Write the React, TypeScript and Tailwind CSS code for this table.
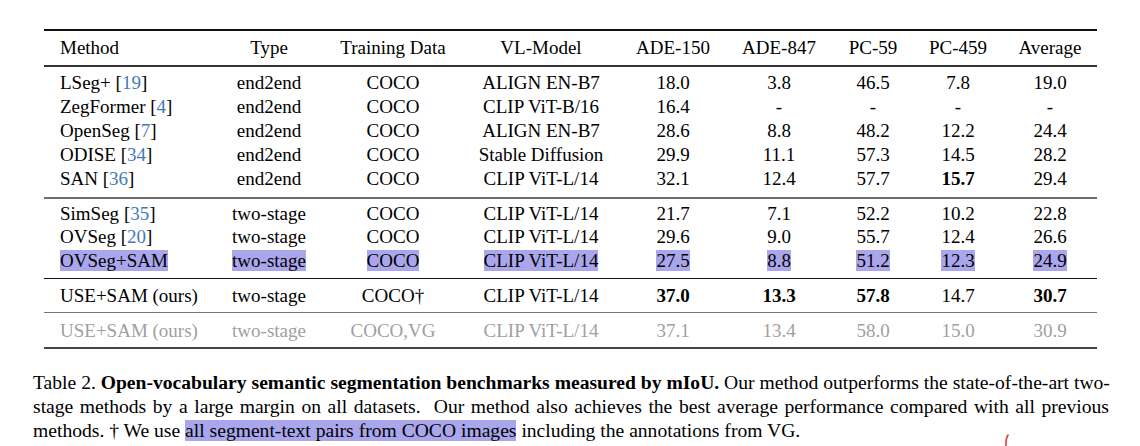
type Cell = {
  text: string;
  cite?: string;
  bold?: boolean;
};

type Row = {
  cells: Cell[];
  highlight?: boolean;
};

const gridCols =
  'grid grid-cols-[164px_122px_126px_170px_94px_118px_70px_100px_89px]';

const header = ['Method', 'Type', 'Training Data', 'VL-Model', 'ADE-150', 'ADE-847', 'PC-59', 'PC-459', 'Average'];

const c = (text: string, bold = false): Cell => ({ text, bold });

const endToEnd: Row[] = [
  { cells: [{ text: 'LSeg+', cite: '19' }, c('end2end'), c('COCO'), c('ALIGN EN-B7'), c('18.0'), c('3.8'), c('46.5'), c('7.8'), c('19.0')] },
  { cells: [{ text: 'ZegFormer', cite: '4' }, c('end2end'), c('COCO'), c('CLIP ViT-B/16'), c('16.4'), c('-'), c('-'), c('-'), c('-')] },
  { cells: [{ text: 'OpenSeg', cite: '7' }, c('end2end'), c('COCO'), c('ALIGN EN-B7'), c('28.6'), c('8.8'), c('48.2'), c('12.2'), c('24.4')] },
  { cells: [{ text: 'ODISE', cite: '34' }, c('end2end'), c('COCO'), c('Stable Diffusion'), c('29.9'), c('11.1'), c('57.3'), c('14.5'), c('28.2')] },
  { cells: [{ text: 'SAN', cite: '36' }, c('end2end'), c('COCO'), c('CLIP ViT-L/14'), c('32.1'), c('12.4'), c('57.7'), c('15.7', true), c('29.4')] },
];

const twoStage: Row[] = [
  { cells: [{ text: 'SimSeg', cite: '35' }, c('two-stage'), c('COCO'), c('CLIP ViT-L/14'), c('21.7'), c('7.1'), c('52.2'), c('10.2'), c('22.8')] },
  { cells: [{ text: 'OVSeg', cite: '20' }, c('two-stage'), c('COCO'), c('CLIP ViT-L/14'), c('29.6'), c('9.0'), c('55.7'), c('12.4'), c('26.6')] },
  {
    highlight: true,
    cells: [c('OVSeg+SAM'), c('two-stage'), c('COCO'), c('CLIP ViT-L/14'), c('27.5'), c('8.8'), c('51.2'), c('12.3'), c('24.9')],
  },
];

const ours: Row = {
  cells: [c('USE+SAM (ours)'), c('two-stage'), c('COCO†'), c('CLIP ViT-L/14'), c('37.0', true), c('13.3', true), c('57.8', true), c('14.7'), c('30.7', true)],
};

const oursVG: Row = {
  cells: [c('USE+SAM (ours)'), c('two-stage'), c('COCO,VG'), c('CLIP ViT-L/14'), c('37.1'), c('13.4'), c('58.0'), c('15.0'), c('30.9')],
};

function TableRow({ row, className = '' }: { row: Row; className?: string }) {
  return (
    <div className={`${gridCols} ${className}`}>
      {row.cells.map((cell, i) => (
        <div
          key={i}
          className={i === 0 ? 'pl-4 text-left whitespace-nowrap' : i === 8 ? 'pr-[5px] text-center whitespace-nowrap' : 'text-center whitespace-nowrap'}
        >
          <span className={`${cell.bold ? 'font-bold' : ''} ${row.highlight ? 'bg-[#aaa6ec]' : ''}`}>
            {cell.text}
            {cell.cite && (
              <>
                {' ['}
                <span className="text-[#3f7bbb]">{cell.cite}</span>
                {']'}
              </>
            )}
          </span>
        </div>
      ))}
    </div>
  );
}

export default function App() {
  return (
    <div className="relative w-[1140px] h-[446px] overflow-hidden bg-white text-black font-['Liberation_Serif','Times_New_Roman',serif] text-[19px] leading-[24px]">
      {/* Table */}
      <div className="pt-[29px] pl-[44px]">
        <div className="w-[1053px]">
          <div className="h-[2px] bg-[#111]" />
          <div className={`${gridCols} pt-[5px] pb-[5px]`}>
            {header.map((h, i) => (
              <div key={h} className={i === 0 ? 'pl-4 text-left' : i === 8 ? 'pr-[5px] text-center' : 'text-center'}>
                {h}
              </div>
            ))}
          </div>
          <div className="h-[1.5px] bg-[#333]" />

          <div className="pt-[4px] pb-[6px]">
            {endToEnd.map((r, i) => (
              <TableRow key={i} row={r} />
            ))}
          </div>
          <div className="h-[2px] bg-[#6e6e6e]" />

          <div className="pt-[3px] pb-[6px]">
            {twoStage.map((r, i) => (
              <TableRow key={i} row={r} className="h-[23.5px]" />
            ))}
          </div>
          <div className="h-px bg-[#111]" />

          <div className="pt-[5px] pb-[4px]">
            <TableRow row={ours} />
          </div>
          <div className="h-px bg-[#777]" />

          <div className="pt-[6px] pb-[4px] text-[#a0a0a0]">
            <TableRow row={oursVG} />
          </div>
          <div className="h-[2px] bg-[#444]" />
        </div>
      </div>

      {/* Caption */}
      <div className="mt-[22px] ml-[33px] w-[1076px] text-[19.6px]">
        <p className="text-justify [text-align-last:justify] whitespace-nowrap">
          Table 2. <span className="font-bold">Open-vocabulary semantic segmentation benchmarks measured by mIoU.</span> Our method outperforms the state-of-the-art two-
        </p>
        <p className="text-justify [text-align-last:justify] whitespace-nowrap">
          stage methods by a large margin on all datasets.&nbsp; Our method also achieves the best average performance compared with all previous
        </p>
        <p className="whitespace-nowrap">
          methods. † We use <span className="bg-[#aaa6ec]">all segment-text pairs from COCO images</span> including the annotations from VG.
        </p>
      </div>

      {/* red pen mark */}
      <svg className="absolute left-[1000px] top-[434px]" width="12" height="14" viewBox="0 0 12 14">
        <path d="M8 1 C6 4 5.5 7 6 13" stroke="#e0453a" strokeWidth="1.6" fill="none" strokeLinecap="round" />
      </svg>
    </div>
  );
}
